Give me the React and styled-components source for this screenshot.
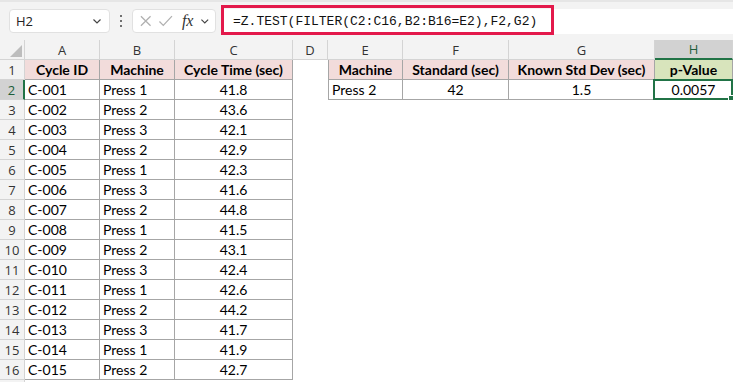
import { Fragment } from "react";
import styled, { createGlobalStyle } from "styled-components";

const GlobalStyle = createGlobalStyle`
  html, body {
    margin: 0;
    padding: 0;
    background: #ffffff;
    overflow: hidden;
  }
  #root {
    width: 733px;
    height: 382px;
    overflow: hidden;
  }
`;

const Page = styled.div`
  width: 733px;
  height: 382px;
  display: flex;
  flex-direction: column;
  font-family: "Lato", "Liberation Sans", sans-serif;
  color: #000;
`;

const FormulaBar = styled.div`
  height: 40px;
  flex-shrink: 0;
  box-sizing: border-box;
  background: #f3f3f3;
  border-top: 2px solid #e6e6e6;
  display: flex;
  align-items: flex-start;
  padding: 6px 0 0 9px;
`;

const NameBox = styled.div`
  width: 101px;
  height: 24px;
  box-sizing: border-box;
  background: #fff;
  border: 1px solid #e1e1e1;
  border-radius: 4px;
  margin-top: 1px;
  display: flex;
  align-items: center;
  justify-content: space-between;
  padding: 0 6px 0 6px;
  font-family: "Open Sans", "Liberation Sans", sans-serif;
  font-size: 13px;
  color: #222;
`;

const Dots = styled.div`
  width: 22px;
  height: 26px;
  display: flex;
  flex-direction: column;
  align-items: center;
  justify-content: center;
  gap: 3px;
  span {
    width: 2px;
    height: 2px;
    background: #444;
    border-radius: 1px;
  }
`;

const FxBox = styled.div`
  width: 84px;
  height: 24px;
  box-sizing: border-box;
  margin-top: 1px;
  background: #fff;
  border: 1px solid #e1e1e1;
  border-radius: 4px;
  display: flex;
  align-items: center;
  padding: 0 4px 0 6px;
  gap: 6px;
  color: #b5b5b5;
`;

const Fx = styled.span`
  font-family: "Liberation Serif", serif;
  font-style: italic;
  font-size: 16px;
  color: #333;
  margin-left: 2px;
`;

const FormulaArea = styled.div`
  flex: 1;
  height: 25px;
  margin-left: 6px;
  margin-top: 1px;
  background: #fff;
  position: relative;
  display: flex;
  align-items: center;
  padding-left: 11px;
  font-family: "Liberation Mono", monospace;
  font-size: 13px;
  color: #111;
`;

const Highlight = styled.div`
  position: absolute;
  left: -1px;
  top: -4px;
  width: 333px;
  height: 30px;
  box-sizing: border-box;
  border: 3px solid #e3194b;
`;

const Sheet = styled.div`
  display: grid;
  grid-template-columns: 25px 75px 75px 118px 35px 75px 106px 146px 78px;
  grid-auto-rows: 20px;
  font-size: 14px;
`;

const Corner = styled.div`
  background: #f3f3f3;
  border-right: 1px solid #d4d4d4;
  border-bottom: 1px solid #d4d4d4;
  display: flex;
  align-items: flex-end;
  justify-content: flex-end;
  padding: 0 2px 2px 0;
  box-sizing: border-box;
`;

const ColHead = styled.div`
  background: ${(p) => (p.$active ? "#d2d2d2" : "#f3f3f3")};
  border-right: 1px solid #d4d4d4;
  border-bottom: ${(p) => (p.$active ? "2px solid #217346" : "1px solid #d4d4d4")};
  box-sizing: border-box;
  display: flex;
  align-items: center;
  justify-content: center;
  color: ${(p) => (p.$active ? "#1e5e3a" : "#333")};
  font-family: "Open Sans", "Liberation Sans", sans-serif;
  font-size: 13px;
`;

const RowHead = styled.div`
  background: ${(p) => (p.$active ? "#d2d2d2" : "#f3f3f3")};
  border-right: ${(p) => (p.$active ? "2px solid #217346" : "1px solid #d4d4d4")};
  border-bottom: 1px solid #d4d4d4;
  box-sizing: border-box;
  display: flex;
  align-items: center;
  justify-content: center;
  color: ${(p) => (p.$active ? "#1e5e3a" : "#333")};
  font-family: "Open Sans", "Liberation Sans", sans-serif;
  font-size: 13px;
`;

const Cell = styled.div`
  position: relative;
  box-sizing: border-box;
  display: flex;
  align-items: center;
  justify-content: ${(p) => (p.$align === "center" ? "center" : "flex-start")};
  padding: 0 3px;
  white-space: nowrap;
  font-weight: ${(p) => (p.$bold ? 700 : 400)};
  background: ${(p) => p.$fill || "#fff"};
  border-right: ${(p) => (p.$boxed ? "1px solid #a6a6a6" : "none")};
  border-bottom: ${(p) => (p.$boxed ? "1px solid #a6a6a6" : "none")};
  border-left: ${(p) => (p.$left ? "1px solid #a6a6a6" : "none")};
`;

const Selected = styled.div`
  position: absolute;
  inset: -1px -1px -1px -2px;
  border: 2px solid #217346;
  pointer-events: none;
  &::after {
    content: "";
    position: absolute;
    right: -4px;
    bottom: -4px;
    width: 5px;
    height: 5px;
    background: #217346;
    border: 1px solid #fff;
  }
`;

const Chevron = () => (
  <svg width="12" height="12" viewBox="0 0 12 12" fill="none" stroke="#444" strokeWidth="1.2">
    <path d="M2.5 4.5 L6 8 L9.5 4.5" />
  </svg>
);

const rows = [
  ["C-001", "Press 1", "41.8"],
  ["C-002", "Press 2", "43.6"],
  ["C-003", "Press 3", "42.1"],
  ["C-004", "Press 2", "42.9"],
  ["C-005", "Press 1", "42.3"],
  ["C-006", "Press 3", "41.6"],
  ["C-007", "Press 2", "44.8"],
  ["C-008", "Press 1", "41.5"],
  ["C-009", "Press 2", "43.1"],
  ["C-010", "Press 3", "42.4"],
  ["C-011", "Press 1", "42.6"],
  ["C-012", "Press 2", "44.2"],
  ["C-013", "Press 3", "41.7"],
  ["C-014", "Press 1", "41.9"],
  ["C-015", "Press 2", "42.7"],
];

const cols = ["A", "B", "C", "D", "E", "F", "G", "H"];
const PINK = "#f2dcdb";
const GREEN = "#d8e4bc";

const App = () => {
  return (
    <Page>
      <GlobalStyle />
      <FormulaBar>
        <NameBox>
          <span>H2</span>
          <Chevron />
        </NameBox>
        <Dots>
          <span />
          <span />
          <span />
        </Dots>
        <FxBox>
          <svg width="14" height="14" viewBox="0 0 14 14" stroke="#b0b0b0" strokeWidth="1.3" fill="none">
            <path d="M2 2 L12 12 M12 2 L2 12" />
          </svg>
          <svg width="16" height="14" viewBox="0 0 16 14" stroke="#b0b0b0" strokeWidth="1.3" fill="none">
            <path d="M1.5 7.5 L5.5 11.5 L14.5 2" />
          </svg>
          <Fx>fx</Fx>
          <Chevron />
        </FxBox>
        <FormulaArea>
          =Z.TEST(FILTER(C2:C16,B2:B16=E2),F2,G2)
          <Highlight />
        </FormulaArea>
      </FormulaBar>

      <Sheet>
        <Corner>
          <svg width="12" height="12" viewBox="0 0 12 12">
            <path d="M12 0 L12 12 L0 12 Z" fill="#bdbdbd" />
          </svg>
        </Corner>
        {cols.map((c) => (
          <ColHead key={c} $active={c === "H"}>
            {c}
          </ColHead>
        ))}

        <RowHead>1</RowHead>
        <Cell $boxed $bold $align="center" $fill={PINK}>Cycle ID</Cell>
        <Cell $boxed $bold $align="center" $fill={PINK}>Machine</Cell>
        <Cell $boxed $bold $align="center" $fill={PINK}>Cycle Time (sec)</Cell>
        <Cell />
        <Cell $boxed $left $bold $align="center" $fill={PINK}>Machine</Cell>
        <Cell $boxed $bold $align="center" $fill={PINK}>Standard (sec)</Cell>
        <Cell $boxed $bold $align="center" $fill={PINK}>Known Std Dev (sec)</Cell>
        <Cell $boxed $bold $align="center" $fill={GREEN}>p-Value</Cell>

        {rows.map((r, i) => (
          <Fragment key={r[0]}>
            <RowHead $active={i === 0}>{i + 2}</RowHead>
            <Cell $boxed>{r[0]}</Cell>
            <Cell $boxed>{r[1]}</Cell>
            <Cell $boxed $align="center">{r[2]}</Cell>
            <Cell />
            {i === 0 ? (
              <>
                <Cell $boxed $left>Press 2</Cell>
                <Cell $boxed $align="center">42</Cell>
                <Cell $boxed $align="center">1.5</Cell>
                <Cell $boxed $align="center">
                  0.0057
                  <Selected />
                </Cell>
              </>
            ) : (
              <>
                <Cell />
                <Cell />
                <Cell />
                <Cell />
              </>
            )}
          </Fragment>
        ))}
        <RowHead />
      </Sheet>
    </Page>
  );
};

export default App;
